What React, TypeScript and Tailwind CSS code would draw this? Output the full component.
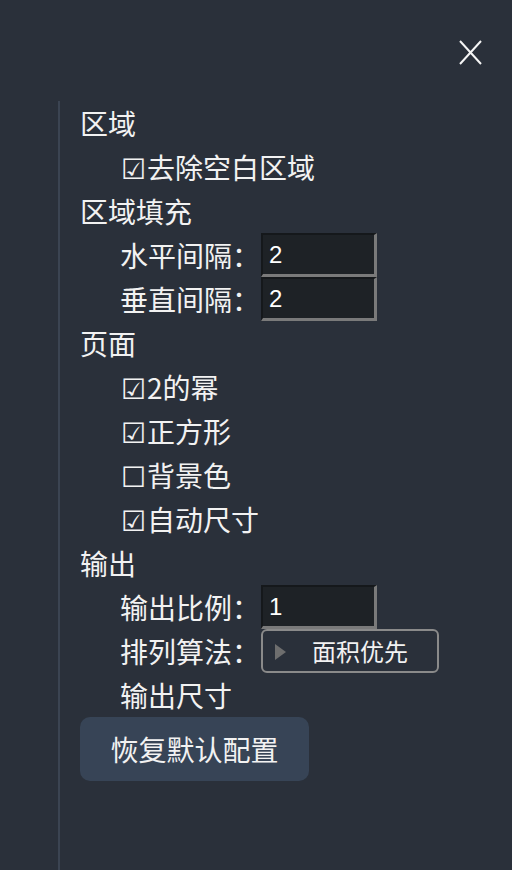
import React from "react";

const cjk = { fontFamily: '"Noto Sans CJK SC", "Noto Sans", sans-serif' };

function Row({ children, indent = false }: { children: React.ReactNode; indent?: boolean }) {
  return (
    <div className={`flex h-[44px] items-center ${indent ? "pl-[40px]" : ""}`}>{children}</div>
  );
}

function Check({ on, label }: { on: boolean; label: string }) {
  return (
    <Row indent>
      <span className="inline-block w-[27px] pl-[1px]">{on ? "☑" : "☐"}</span>
      <span>{label}</span>
    </Row>
  );
}

function NumInput({ value }: { value: string }) {
  return (
    <div
      className="ml-[1px] flex h-[44px] w-[116px] items-center border-t-2 border-l-2 border-b-[3px] border-r-[3px] border-t-[#15181b] border-l-[#15181b] border-b-[#7a7a7a] border-r-[#7a7a7a] bg-[#1e2226] pl-[6px] text-[24px] text-white"
      style={{ fontFamily: '"Liberation Sans", Arial, sans-serif' }}
    >
      {value}
    </div>
  );
}

export default function App() {
  return (
    <div className="relative h-[870px] w-[512px] overflow-hidden bg-[#2a303a] text-[28px] leading-[44px] text-[#f2f2f2]" style={cjk}>
      <button className="absolute left-[458px] top-[40px] h-[25px] w-[25px]" aria-label="close">
        <svg width="25" height="25" viewBox="0 0 25 25">
          <path d="M2 1 L23 24 M23 1 L2 24" stroke="#f5f5f5" strokeWidth="2" fill="none" />
        </svg>
      </button>
      <div className="ml-[58px] mt-[101px] min-h-[769px] border-l-2 border-[#3b4452] pl-[20px]">
        <Row>区域</Row>
        <Check on label="去除空白区域" />
        <Row>区域填充</Row>
        <Row indent>
          <span>水平间隔：</span>
          <NumInput value="2" />
        </Row>
        <Row indent>
          <span>垂直间隔：</span>
          <NumInput value="2" />
        </Row>
        <Row>页面</Row>
        <Check on label="2的幂" />
        <Check on label="正方形" />
        <Check on={false} label="背景色" />
        <Check on label="自动尺寸" />
        <Row>输出</Row>
        <Row indent>
          <span>输出比例：</span>
          <NumInput value="1" />
        </Row>
        <Row indent>
          <span>排列算法：</span>
          <div className="relative ml-[1px] flex h-[44px] w-[178px] items-center justify-center rounded-[6px] border-2 border-[#8a8a8a] text-[24px]">
            <svg className="absolute left-[12px] top-[13px]" width="12" height="16" viewBox="0 0 12 16">
              <path d="M0 0 L11 8 L0 16 Z" fill="#6e6e6e" />
            </svg>
            <span className="pl-[20px]">面积优先</span>
          </div>
        </Row>
        <Row indent>输出尺寸</Row>
        <button className="mt-0 flex h-[64px] w-[229px] items-center justify-center rounded-[10px] bg-[#374456] text-[28px] text-[#f2f2f2]" style={cjk}>
          恢复默认配置
        </button>
      </div>
    </div>
  );
}
